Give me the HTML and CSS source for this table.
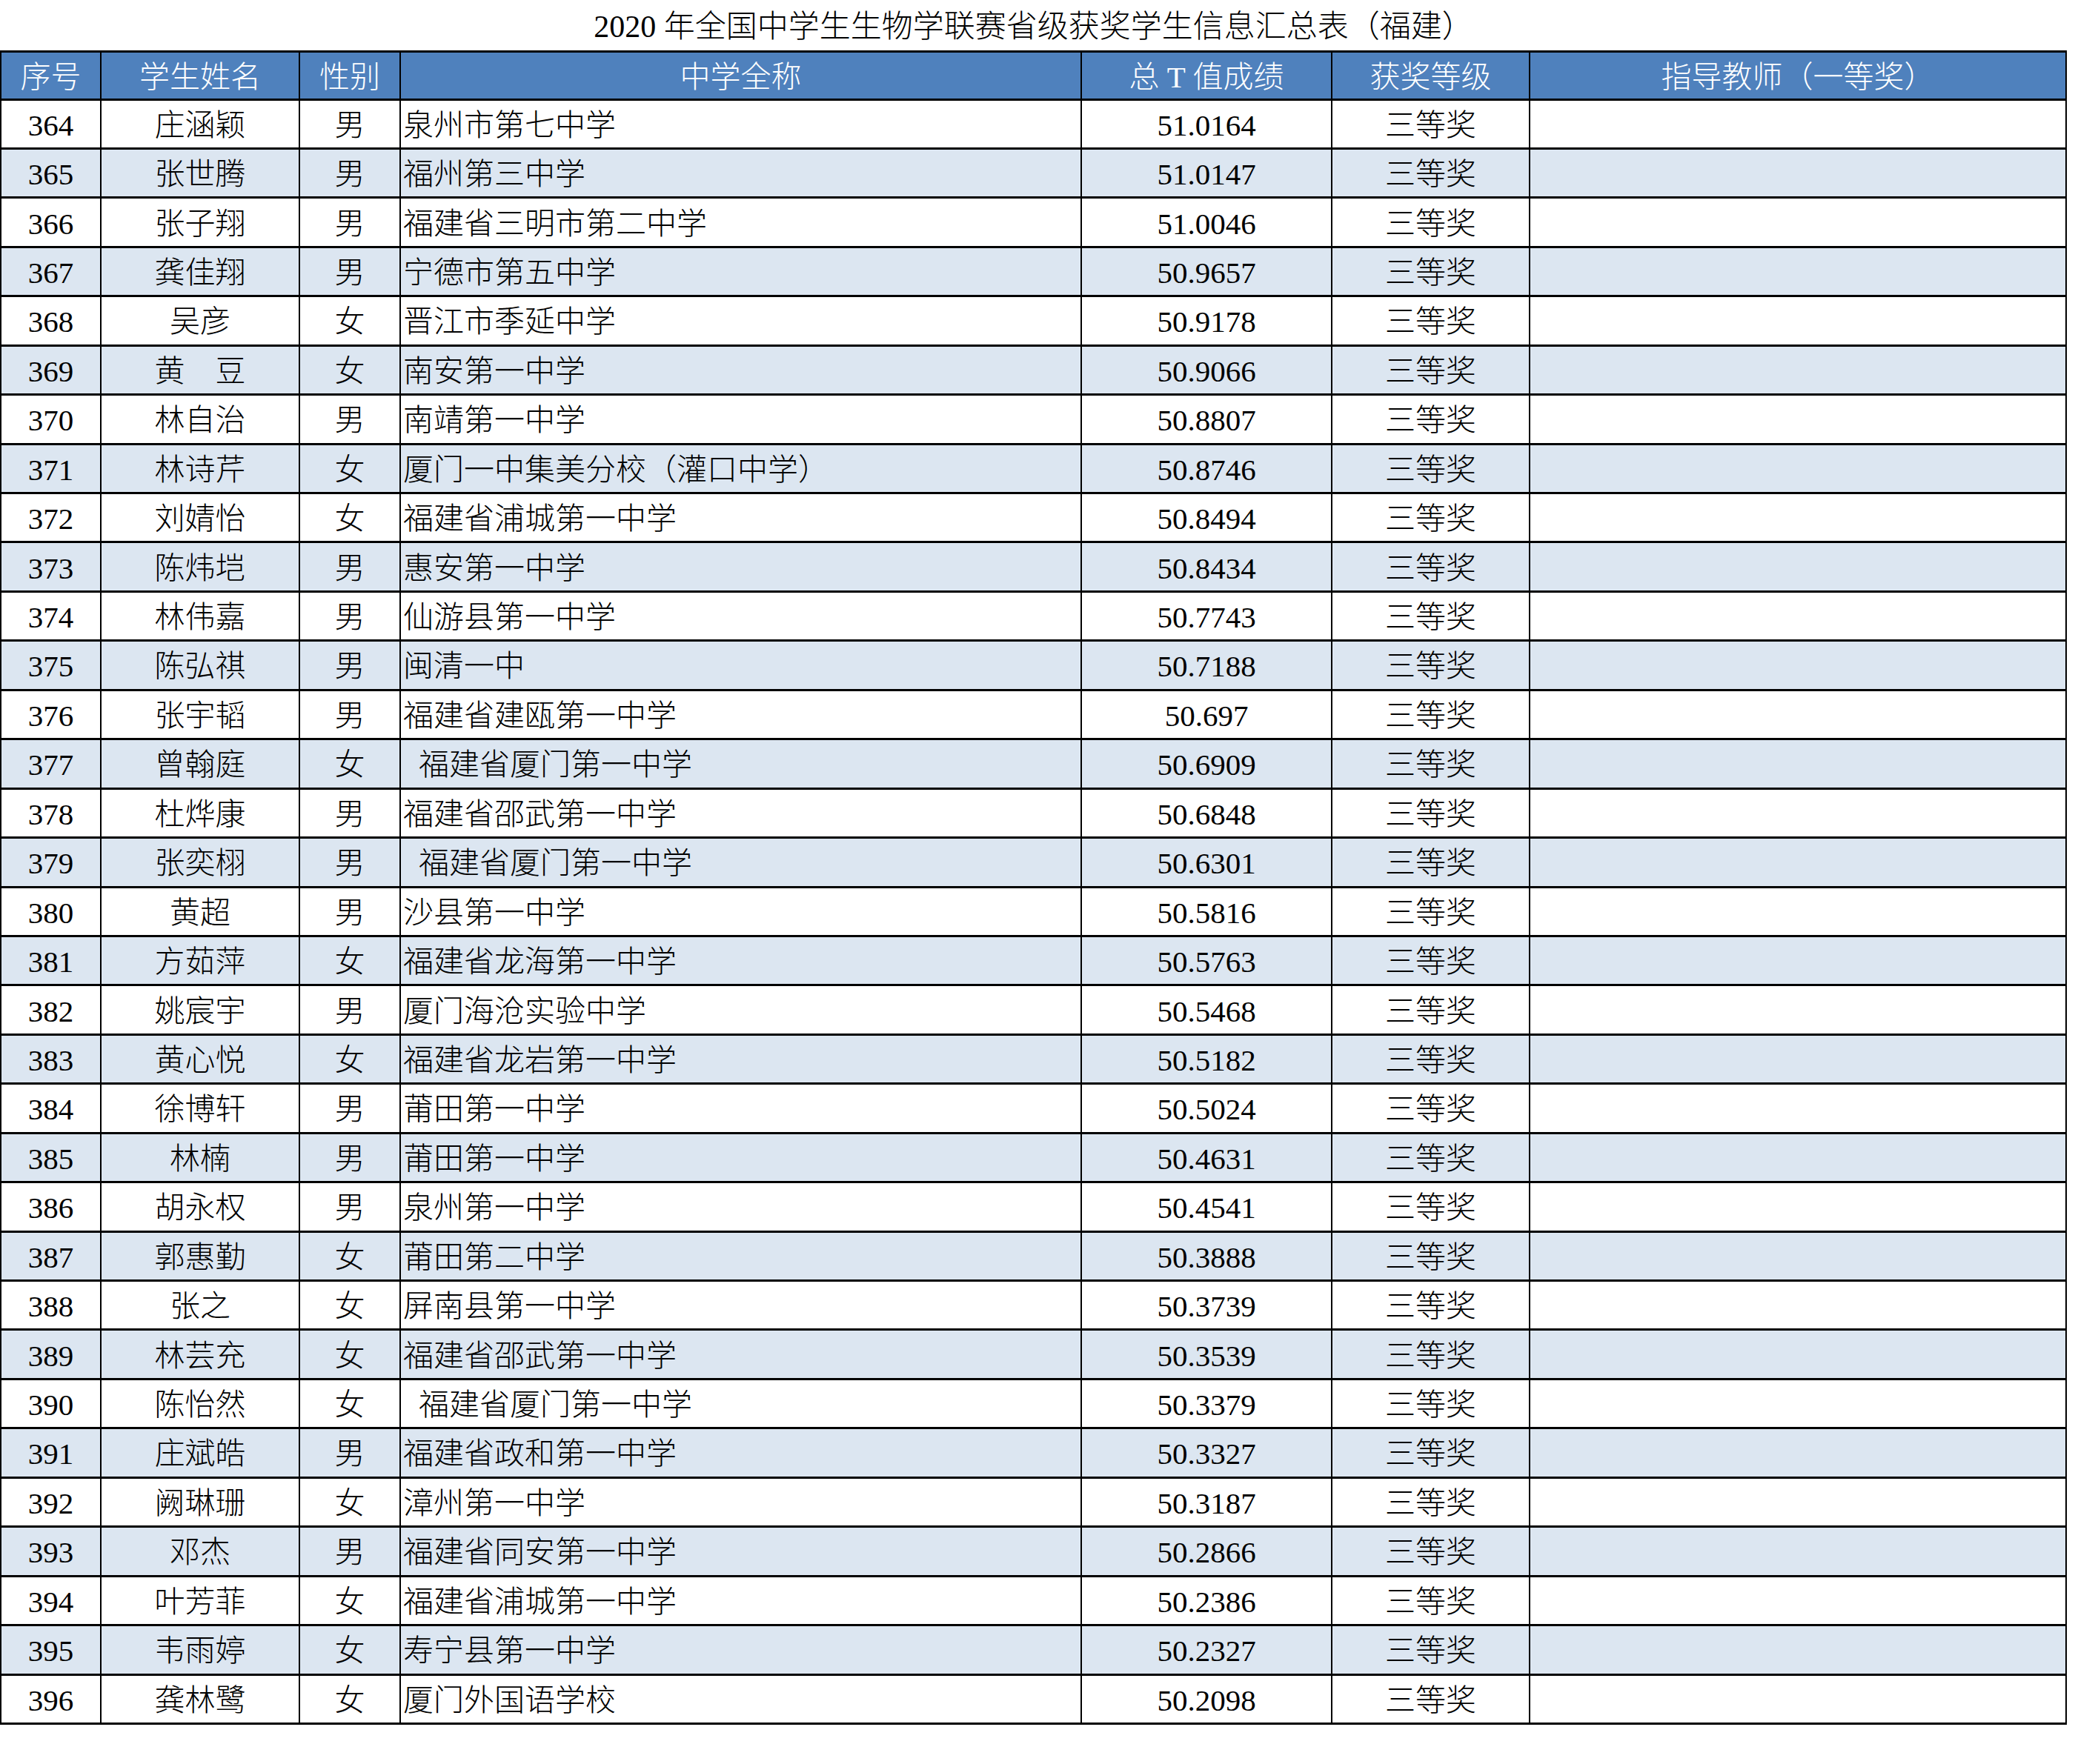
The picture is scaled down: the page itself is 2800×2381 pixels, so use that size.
FILE: index.html
```html
<!DOCTYPE html>
<html lang="zh-CN">
<head>
<meta charset="utf-8">
<title>2020年全国中学生生物学联赛省级获奖学生信息汇总表（福建）</title>
<link rel="stylesheet" href="styles.css">
</head>
<body>
<div class="title">2020 年全国中学生生物学联赛省级获奖学生信息汇总表（福建）</div>
<table class="sheet">
<colgroup>
<col class="c-no"><col class="c-name"><col class="c-sex"><col class="c-school"><col class="c-score"><col class="c-award"><col class="c-teacher">
</colgroup>
<thead>
<tr><th>序号</th><th>学生姓名</th><th>性别</th><th>中学全称</th><th>总 T 值成绩</th><th>获奖等级</th><th>指导教师（一等奖）</th></tr>
</thead>
<tbody>
<tr><td>364</td><td>庄涵颖</td><td>男</td><td class="school">泉州市第七中学</td><td>51.0164</td><td>三等奖</td><td></td></tr>
<tr><td>365</td><td>张世腾</td><td>男</td><td class="school">福州第三中学</td><td>51.0147</td><td>三等奖</td><td></td></tr>
<tr><td>366</td><td>张子翔</td><td>男</td><td class="school">福建省三明市第二中学</td><td>51.0046</td><td>三等奖</td><td></td></tr>
<tr><td>367</td><td>龚佳翔</td><td>男</td><td class="school">宁德市第五中学</td><td>50.9657</td><td>三等奖</td><td></td></tr>
<tr><td>368</td><td>吴彦</td><td>女</td><td class="school">晋江市季延中学</td><td>50.9178</td><td>三等奖</td><td></td></tr>
<tr><td>369</td><td>黄　豆</td><td>女</td><td class="school">南安第一中学</td><td>50.9066</td><td>三等奖</td><td></td></tr>
<tr><td>370</td><td>林自治</td><td>男</td><td class="school">南靖第一中学</td><td>50.8807</td><td>三等奖</td><td></td></tr>
<tr><td>371</td><td>林诗芹</td><td>女</td><td class="school">厦门一中集美分校（灌口中学）</td><td>50.8746</td><td>三等奖</td><td></td></tr>
<tr><td>372</td><td>刘婧怡</td><td>女</td><td class="school">福建省浦城第一中学</td><td>50.8494</td><td>三等奖</td><td></td></tr>
<tr><td>373</td><td>陈炜垲</td><td>男</td><td class="school">惠安第一中学</td><td>50.8434</td><td>三等奖</td><td></td></tr>
<tr><td>374</td><td>林伟嘉</td><td>男</td><td class="school">仙游县第一中学</td><td>50.7743</td><td>三等奖</td><td></td></tr>
<tr><td>375</td><td>陈弘祺</td><td>男</td><td class="school">闽清一中</td><td>50.7188</td><td>三等奖</td><td></td></tr>
<tr><td>376</td><td>张宇韬</td><td>男</td><td class="school">福建省建瓯第一中学</td><td>50.697</td><td>三等奖</td><td></td></tr>
<tr><td>377</td><td>曾翰庭</td><td>女</td><td class="school indent">福建省厦门第一中学</td><td>50.6909</td><td>三等奖</td><td></td></tr>
<tr><td>378</td><td>杜烨康</td><td>男</td><td class="school">福建省邵武第一中学</td><td>50.6848</td><td>三等奖</td><td></td></tr>
<tr><td>379</td><td>张奕栩</td><td>男</td><td class="school indent">福建省厦门第一中学</td><td>50.6301</td><td>三等奖</td><td></td></tr>
<tr><td>380</td><td>黄超</td><td>男</td><td class="school">沙县第一中学</td><td>50.5816</td><td>三等奖</td><td></td></tr>
<tr><td>381</td><td>方茹萍</td><td>女</td><td class="school">福建省龙海第一中学</td><td>50.5763</td><td>三等奖</td><td></td></tr>
<tr><td>382</td><td>姚宸宇</td><td>男</td><td class="school">厦门海沧实验中学</td><td>50.5468</td><td>三等奖</td><td></td></tr>
<tr><td>383</td><td>黄心悦</td><td>女</td><td class="school">福建省龙岩第一中学</td><td>50.5182</td><td>三等奖</td><td></td></tr>
<tr><td>384</td><td>徐博轩</td><td>男</td><td class="school">莆田第一中学</td><td>50.5024</td><td>三等奖</td><td></td></tr>
<tr><td>385</td><td>林楠</td><td>男</td><td class="school">莆田第一中学</td><td>50.4631</td><td>三等奖</td><td></td></tr>
<tr><td>386</td><td>胡永权</td><td>男</td><td class="school">泉州第一中学</td><td>50.4541</td><td>三等奖</td><td></td></tr>
<tr><td>387</td><td>郭惠勤</td><td>女</td><td class="school">莆田第二中学</td><td>50.3888</td><td>三等奖</td><td></td></tr>
<tr><td>388</td><td>张之</td><td>女</td><td class="school">屏南县第一中学</td><td>50.3739</td><td>三等奖</td><td></td></tr>
<tr><td>389</td><td>林芸充</td><td>女</td><td class="school">福建省邵武第一中学</td><td>50.3539</td><td>三等奖</td><td></td></tr>
<tr><td>390</td><td>陈怡然</td><td>女</td><td class="school indent">福建省厦门第一中学</td><td>50.3379</td><td>三等奖</td><td></td></tr>
<tr><td>391</td><td>庄斌皓</td><td>男</td><td class="school">福建省政和第一中学</td><td>50.3327</td><td>三等奖</td><td></td></tr>
<tr><td>392</td><td>阙琳珊</td><td>女</td><td class="school">漳州第一中学</td><td>50.3187</td><td>三等奖</td><td></td></tr>
<tr><td>393</td><td>邓杰</td><td>男</td><td class="school">福建省同安第一中学</td><td>50.2866</td><td>三等奖</td><td></td></tr>
<tr><td>394</td><td>叶芳菲</td><td>女</td><td class="school">福建省浦城第一中学</td><td>50.2386</td><td>三等奖</td><td></td></tr>
<tr><td>395</td><td>韦雨婷</td><td>女</td><td class="school">寿宁县第一中学</td><td>50.2327</td><td>三等奖</td><td></td></tr>
<tr><td>396</td><td>龚林鹭</td><td>女</td><td class="school">厦门外国语学校</td><td>50.2098</td><td>三等奖</td><td></td></tr>
</tbody>
</table>
</body>
</html>
```
FILE: styles.css
```css
html, body {
  margin: 0;
  padding: 0;
  background: #ffffff;
}
body {
  font-family: "Liberation Serif", "Noto Sans CJK SC", serif;
  font-size: 41px;
  font-weight: 300;
  color: #000000;
}
.title {
  box-sizing: border-box;
  height: 68px;
  padding-top: 5px;
  line-height: 63px;
  font-size: 42px;
  text-align: center;
  width: 2789px;
  white-space: nowrap;
}
.sheet {
  border-collapse: collapse;
  table-layout: fixed;
  width: 2789px;
}
.c-no { width: 135px; }
.c-name { width: 268px; }
.c-sex { width: 136px; }
.c-school { width: 919px; }
.c-score { width: 338px; }
.c-award { width: 267px; }
.c-teacher { width: 724px; }
.sheet th,
.sheet td {
  border-top: 3px solid #000;
  border-bottom: 3px solid #000;
  border-left: 2px solid #000;
  border-right: 2px solid #000;
  padding: 4px 0 0 0;
  text-align: center;
  vertical-align: middle;
  white-space: pre;
  overflow: hidden;
  line-height: 1.2;
}
.sheet thead tr {
  height: 64.5px;
}
.sheet th {
  background: #4f81bd;
  color: #ffffff;
  font-weight: 300;
  padding: 6px 0 0 0;
}
.sheet tbody tr {
  height: 66.44px;
}
.sheet tbody tr:nth-child(even) td {
  background: #dce6f1;
}
.sheet td.school {
  text-align: left;
  padding-left: 3px;
}
.sheet td.indent {
  padding-left: 24px;
}
```
